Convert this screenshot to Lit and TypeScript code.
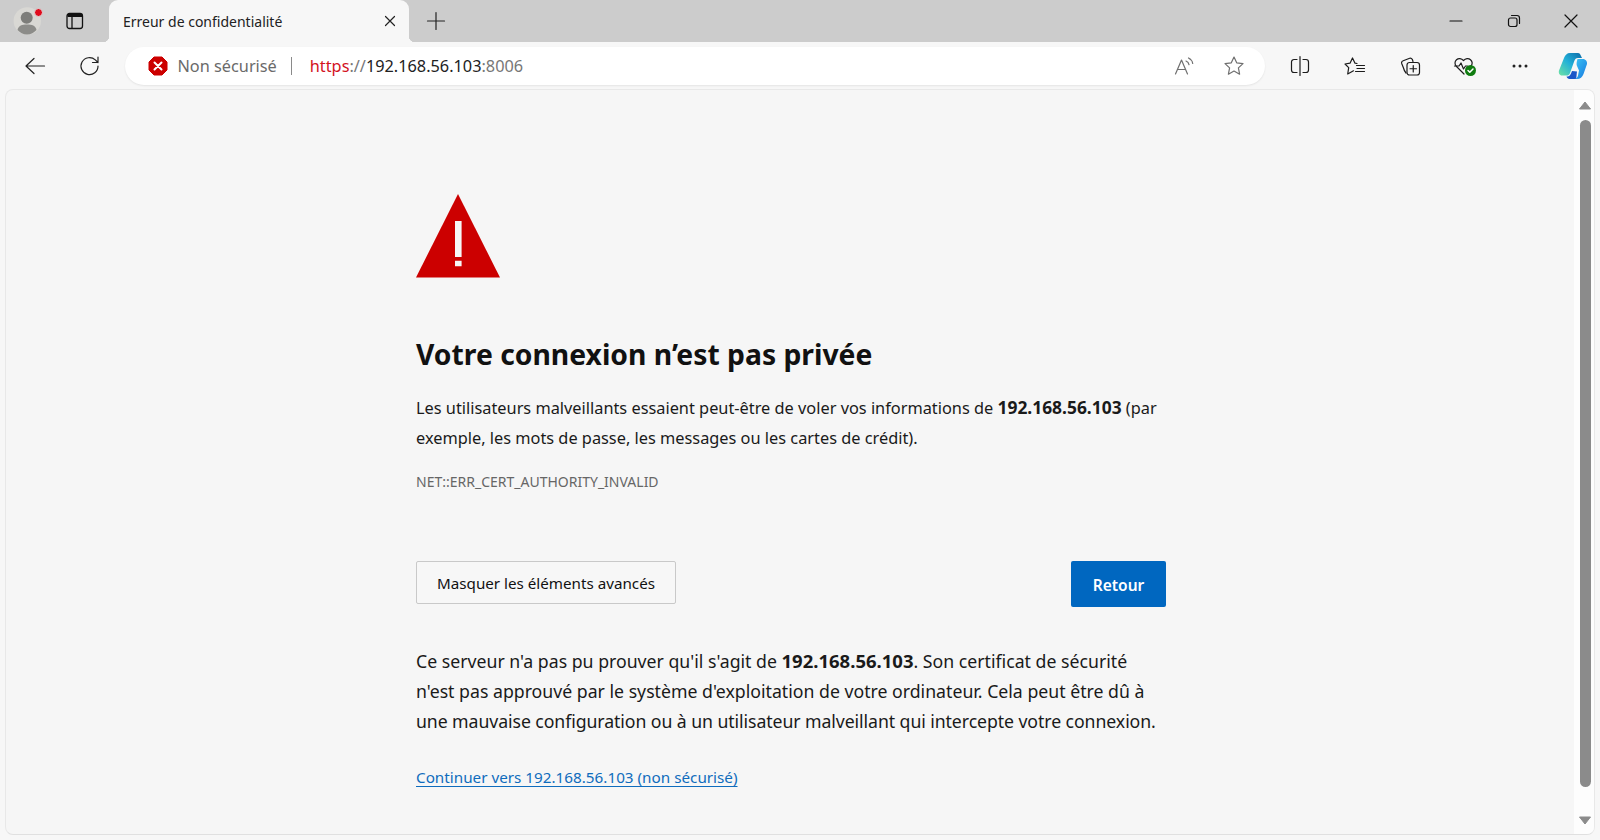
import { LitElement, html, css, svg } from 'lit';
import { customElement } from 'lit/decorators.js';

const ico = (w: number, body: unknown, box = '0 0 20 20') =>
  html`<svg width=${w} height=${w} viewBox=${box} fill="none" stroke="currentColor" stroke-width="1.2" stroke-linecap="round" stroke-linejoin="round">${body}</svg>`;

@customElement('app-root')
export class AppRoot extends LitElement {
  static styles = css`
    :host {
      display: block;
      width: 1600px;
      height: 840px;
      overflow: hidden;
      background: #f7f7f7;
      font-family: "Noto Sans", "Open Sans", sans-serif;
      color: #111;
    }
    .tabstrip {
      height: 42px;
      background: #cccccc;
      display: flex;
      align-items: center;
    }
    .profile {
      width: 30px;
      height: 30px;
      margin-left: 13px;
      position: relative;
    }
    .profile i {
      position: absolute;
      right: 0;
      top: 1.500px;
      width: 7.500px;
      height: 7.500px;
      border-radius: 50%;
      background: #e00b1c;
      border: 1.500px solid #dcdcdc;
    }
    .sidebtn {
      margin-left: 22px;
      width: 20px;
      height: 20px;
    }
    .tab {
      margin-left: 24px;
      width: 300px;
      height: 42px;
      background: #f7f7f7;
      border-radius: 9px 9px 0 0;
      display: flex;
      align-items: center;
      padding: 0 11px 0 14px;
      box-sizing: border-box;
      position: relative;
      font-size: 14px;
      color: #222;
    }
    .tab::before,
    .tab::after {
      content: "";
      position: absolute;
      bottom: 0;
      width: 6px;
      height: 6px;
    }
    .tab::before {
      left: -6px;
      background: radial-gradient(circle at 0 0, transparent 6px, #f7f7f7 6.5px);
    }
    .tab::after {
      right: -6px;
      background: radial-gradient(circle at 100% 0, transparent 6px, #f7f7f7 6.5px);
    }
    .tab span { flex: 1; }
    .tab svg { display: block; }
    .plus { margin-left: 17px; color: #222; display: flex; }
    .grow { flex: 1; }
    .winctl {
      display: flex;
      color: #111;
    }
    .winctl div {
      width: 57.5px;
      height: 42px;
      display: flex;
      align-items: center;
      justify-content: center;
    }
    .toolbar {
      height: 47px;
      display: flex;
      align-items: center;
    }
    .nav { display: flex; color: #222; margin-left: 24px; gap: 33px; margin-right: 24px; }
    .nav svg { display: block; }
    .addr {
      width: 1140px;
      height: 38px;
      background: #fff;
      border-radius: 19px;
      box-shadow: 0 1px 2px rgba(0,0,0,.08);
      display: flex;
      align-items: center;
      padding: 0 20px 0 23px;
      box-sizing: border-box;
      font-size: 16.3px;
    }
    .addr .warn { display: block; margin-right: 9.5px; }
    .ns { color: #6a6a6a; }
    .sep { width: 1px; height: 18px; background: #8a8a8a; margin: 0 18px 0 14px; }
    .https { color: #d3121d; }
    .slashes { color: #777; }
    .host { color: #222; }
    .port { color: #777; }
    .addr-right { margin-left: auto; display: flex; gap: 28.5px; color: #6f6f6f; }
    .addr-right svg { display: block; }
    .tools {
      display: flex;
      align-items: center;
      color: #1c1c1c;
      margin-left: 7px;
    }
    .tools div {
      width: 55px;
      display: flex;
      justify-content: center;
    }
    .tools svg { display: block; }
    .tools .cop { width: 50px; padding-left: 2px; box-sizing: border-box; }
    .frame {
      margin: 0 5px;
      height: 746px;
      background: #f6f6f6;
      border: 1px solid #e8e8e8;
      border-bottom-color: #e0e0e0;
      border-radius: 8px;
      box-sizing: border-box;
      display: flex;
      overflow: hidden;
    }
    .page {
      flex: 1;
      padding: 104px 0 0 410px;
      box-sizing: border-box;
    }
    .content { width: 750px; }
    .warning { display: block; }
    h1 {
      margin: 56px 0 0;
      font-size: 28.3px;
      line-height: 40px;
      font-weight: 700;
      color: #111;
      white-space: nowrap;
    }
    p {
      margin: 18px 0 0;
      font-size: 16.33px;
      line-height: 30px;
      white-space: nowrap;
      color: #1a1a1a;
    }
    .intro b { font-size: 17.4px; }
    .code {
      margin-top: 19px;
      font-size: 14px;
      line-height: 20px;
      color: #666;
    }
    .actions {
      margin-top: 69px;
      display: flex;
      justify-content: space-between;
      align-items: flex-start;
    }
    button {
      font: inherit;
      box-sizing: border-box;
      border-radius: 2px;
      padding: 0;
    }
    .adv {
      width: 260px;
      height: 43px;
      background: #f7f7f7;
      border: 1px solid #c9c9c9;
      font-size: 15.2px;
      color: #111;
    }
    .back {
      width: 95px;
      height: 46px;
      background: #0067c0;
      border: 0;
      color: #fff;
      font-size: 15.5px;
      font-weight: 600;
      padding-top: 2px;
    }
    .explain { margin-top: 39px; font-size: 17.7px; }
    .explain b { font-size: 18.5px; }
    .tight { letter-spacing: -0.08px; }
    .cont { margin-top: 26px; font-size: 15.25px; line-height: 30px; }
    a { color: #0f6cbd; text-decoration: underline; text-underline-offset: 3px; }
    .scroll {
      width: 20px;
      background: #fdfdfd;
      display: flex;
      flex-direction: column;
      align-items: center;
      padding: 11px 0 9px 2px;
      box-sizing: border-box;
    }
    .thumb {
      flex: 1;
      width: 11px;
      margin: 10px 0 29px;
      background: #8b8b8b;
      border-radius: 5.5px;
    }
    .scroll svg { display: block; }
  `;

  render() {
    return html`
      <div class="tabstrip">
        <div class="profile">
          <svg width="30" height="30" viewBox="0 0 30 30">
            <circle cx="14.300" cy="15" r="13.700" fill="#d9d8d4"/>
            <circle cx="13.700" cy="11.700" r="6" fill="#7d7d7a"/>
            <path d="M4.500 24c1-4.500 4.500-5.500 9.500-5.500s8.500 1 9.500 5.500c-2.500 2.700-5.500 4.500-9.500 4.500s-7-1.800-9.500-4.500z" fill="#8c8c89"/>
          </svg>
          <i></i>
        </div>
        <div class="sidebtn">
          <svg width="20" height="20" viewBox="0 0 20 20" fill="none" stroke="#111" stroke-width="1.300">
            <rect x="2" y="2.500" width="15.500" height="15" rx="2.500"/>
            <path d="M2.500 3h14.500v3H2.500z" fill="#111" stroke="none"/>
            <path d="M7 6v11"/>
          </svg>
        </div>
        <div class="tab">
          <span>Erreur de confidentialité</span>
          ${ico(16, svg`<path d="M3.500 3.500l9 9M12.500 3.500l-9 9"/>`, '0 0 16 16')}
        </div>
        <div class="plus">${ico(20, svg`<path d="M10 1.500v17M1.500 10h17"/>`)}</div>
        <div class="grow"></div>
        <div class="winctl">
          <div>${ico(16, svg`<path d="M2 8h12"/>`, '0 0 16 16')}</div>
          <div>${ico(16, svg`<rect x="2.500" y="5" width="8.500" height="8.500" rx="2"/><path d="M5.500 2.500h5.500a2.500 2.500 0 0 1 2.500 2.500v5.500"/>`, '0 0 16 16')}</div>
          <div>${ico(16, svg`<path d="M2 2l12 12M14 2L2 14"/>`, '0 0 16 16')}</div>
        </div>
      </div>
      <div class="toolbar">
        <div class="nav">
          ${ico(22, svg`<path d="M2 11h18.500M10 3.500L2 11l8 7.500"/>`, '0 0 22 22')}
          ${ico(22, svg`<path d="M19 11a8.500 8.500 0 1 1-2.700-6.100l2.700 2.600M19 2v5.500h-5.500"/>`, '0 0 22 22')}
        </div>
        <div class="addr">
          <svg class="warn" width="20" height="20" viewBox="0 0 20 20">
            <path d="M6 1h8l5 5v8l-5 5H6l-5-5V6z" fill="#cc0000" stroke="#cc0000" stroke-linejoin="round" stroke-width="1"/>
            <path d="M6.500 6.500l7 7M13.500 6.500l-7 7" stroke="#fff" stroke-width="2" stroke-linecap="round"/>
          </svg>
          <span class="ns">Non sécurisé</span>
          <span class="sep"></span>
          <span><span class="https">https</span><span class="slashes">://</span><span class="host">192.168.56.103</span><span class="port">:8006</span></span>
          <div class="addr-right">
            ${ico(22, svg`<path d="M2.500 19L8.500 5l6 14M4.500 14.500h8"/><path d="M13 6c1.700.7 2.700 2 3 3.700M15.500 3c2.300 1.100 3.800 3 4.200 5.500"/>`, '0 0 22 22')}
            ${ico(22, svg`<path d="M11 2l2.700 5.800 6.300.8-4.600 4.300 1.200 6.300L11 16.100l-5.600 3.100 1.200-6.300L2 8.600l6.300-.8z"/>`, '0 0 22 22')}
          </div>
        </div>
        <div class="tools">
          <div>${ico(22, svg`<path d="M11 1.500v19M8 4.500H5a2.500 2.500 0 0 0-2.500 2.500v8A2.500 2.500 0 0 0 5 17.500h3M14 4.500h3A2.500 2.500 0 0 1 19.500 7v8a2.500 2.500 0 0 1-2.500 2.500h-3"/>`, '0 0 22 22')}</div>
          <div>${ico(22, svg`<path d="M13 8.500l-2-.3L8.500 3 6 8.200 1 9l3.700 3.700L3.700 19l5.800-3.200"/><path d="M12.500 10.500h8M13 13.500h7.500M11.500 16.500h9"/>`, '0 0 22 22')}</div>
          <div>${ico(22, svg`<path d="M4.500 13L2.700 8.500c-.4-1.200.3-2.400 1.500-2.800l6.500-2.400c1.200-.4 2.400.3 2.800 1.500l.5 1.700M4.500 13c.5 2 1.300 3.700 2.500 5"/><rect x="8" y="7.500" width="12.500" height="12.500" rx="2.500"/><path d="M14.250 10.500v6.500M11 13.750h6.500"/>`, '0 0 22 22')}</div>
          <div>
            <svg width="24" height="22" viewBox="0 0 24 22" fill="none" stroke="#1c1c1c" stroke-width="1.200" stroke-linecap="round" stroke-linejoin="round">
              <path d="M11 19L3.500 11.500C1.500 9.500 1.500 6.500 3.500 4.700c2-1.800 5-1.500 7 .8 2-2.300 5-2.600 7-.8 1.800 1.600 2 4 .8 6"/>
              <path d="M1.500 11h4.500l2-3 2.500 6 2-3h2"/>
              <circle cx="17.500" cy="15.500" r="5.500" fill="#107c10" stroke="none"/>
              <path d="M15 15.500l1.800 1.800 3.200-3.300" stroke="#fff" stroke-width="1.500"/>
            </svg>
          </div>
          <div><svg width="18" height="6" viewBox="0 0 18 6"><circle cx="3" cy="3" r="1.500" fill="#222"/><circle cx="9" cy="3" r="1.500" fill="#222"/><circle cx="15" cy="3" r="1.500" fill="#222"/></svg></div>
          <div class="cop">
            <svg width="30" height="28" viewBox="0 0 30 28">
              <defs>
                <linearGradient id="cpa" x1="0" y1="1" x2="1" y2="0">
                  <stop offset="0" stop-color="#6fe3a4"/><stop offset=".5" stop-color="#22b0d8"/><stop offset="1" stop-color="#0c6aa8"/>
                </linearGradient>
                <linearGradient id="cpb" x1="0" y1="0" x2="1" y2="1">
                  <stop offset="0" stop-color="#3cc6f4"/><stop offset="1" stop-color="#1878e0"/>
                </linearGradient>
              </defs>
              <path d="M12 1h8c1.500 0 2.300 1.200 3 3l1 2h-4c-2 0-3 1-3.700 3L12 21c-.6 2-1.800 2.500-3.500 2.500H4C1.500 23.500.3 21 1 18.500L6 6c1.200-3 3-5 6-5z" fill="url(#cpa)"/>
              <path d="M18 27h-6.500c-1.500 0-2.500-1-3-2.500 2 0 3.500-.5 4.500-3l1-2.500 5 .5c-.5 3-.5 7.500-1 7.500z" fill="#1a56c8"/>
              <path d="M19 7h6c2.500 0 4.500 2.500 4 5l-3.500 10c-1 3-3.500 5-6.500 5h-3c2 0 3.500-1.500 4-3.500l1-5-2-4.500c-.7-1.500-.5-4 .5-7z" fill="url(#cpb)"/>
            </svg>
          </div>
        </div>
      </div>
      <div class="frame">
        <div class="page">
          <div class="content">
            <svg class="warning" width="84" height="84" viewBox="0 0 84 84">
              <path d="M42 0L84 83.500H0z" fill="#cc0000"/>
              <path d="M39 27h6.600v36h-6.600zM39 66.700h6.600v5.600h-6.600z" fill="#f7f7f7"/>
            </svg>
            <h1>Votre connexion n’est pas privée</h1>
            <p class="intro">Les utilisateurs malveillants essaient peut-être de voler vos informations de <b>192.168.56.103</b> (par<br>exemple, les mots de passe, les messages ou les cartes de crédit).</p>
            <div class="code">NET::ERR_CERT_AUTHORITY_INVALID</div>
            <div class="actions">
              <button class="adv">Masquer les éléments avancés</button>
              <button class="back">Retour</button>
            </div>
            <p class="explain">Ce serveur n'a pas pu prouver qu'il s'agit de <b>192.168.56.103</b>. Son certificat de sécurité<br>n'est pas approuvé par le système d'exploitation de votre ordinateur. Cela peut être dû à<br><span class="tight">une mauvaise configuration ou à un utilisateur malveillant qui intercepte votre connexion.</span></p>
            <div class="cont"><a href="#">Continuer vers 192.168.56.103 (non sécurisé)</a></div>
          </div>
        </div>
        <div class="scroll">
          <svg width="14" height="9" viewBox="0 0 14 9"><path d="M7 1l5.500 7h-11z" fill="#8b8b8b" stroke="#8b8b8b" stroke-linejoin="round"/></svg>
          <div class="thumb"></div>
          <svg width="14" height="9" viewBox="0 0 14 9"><path d="M7 8l5.500-7h-11z" fill="#8b8b8b" stroke="#8b8b8b" stroke-linejoin="round"/></svg>
        </div>
      </div>
    `;
  }
}
